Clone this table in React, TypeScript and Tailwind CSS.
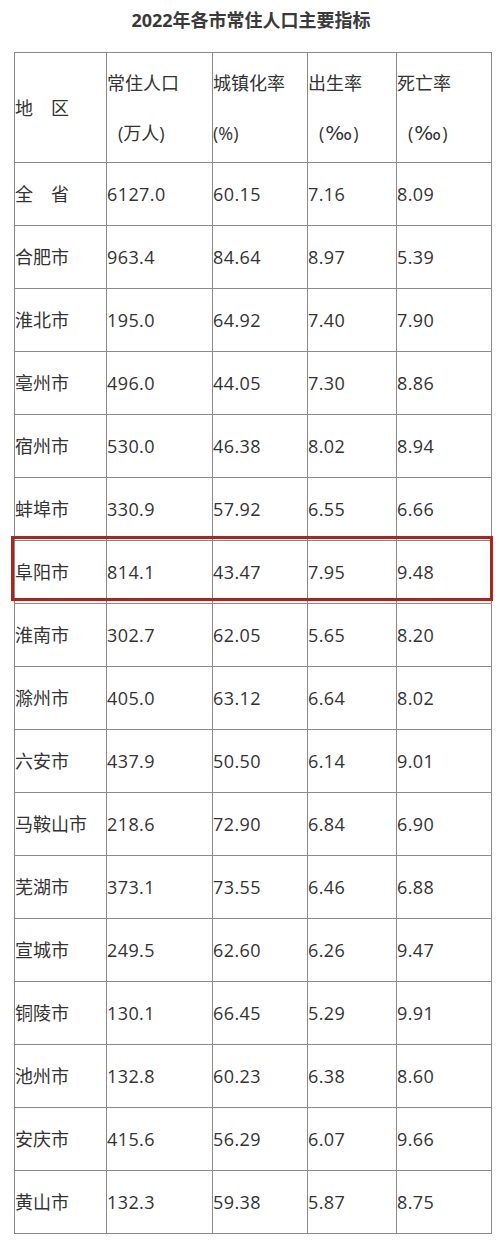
const rows: [string, string, string, string, string][] = [
  ["全\u3000省", "6127.0", "60.15", "7.16", "8.09"],
  ["合肥市", "963.4", "84.64", "8.97", "5.39"],
  ["淮北市", "195.0", "64.92", "7.40", "7.90"],
  ["亳州市", "496.0", "44.05", "7.30", "8.86"],
  ["宿州市", "530.0", "46.38", "8.02", "8.94"],
  ["蚌埠市", "330.9", "57.92", "6.55", "6.66"],
  ["阜阳市", "814.1", "43.47", "7.95", "9.48"],
  ["淮南市", "302.7", "62.05", "5.65", "8.20"],
  ["滁州市", "405.0", "63.12", "6.64", "8.02"],
  ["六安市", "437.9", "50.50", "6.14", "9.01"],
  ["马鞍山市", "218.6", "72.90", "6.84", "6.90"],
  ["芜湖市", "373.1", "73.55", "6.46", "6.88"],
  ["宣城市", "249.5", "62.60", "6.26", "9.47"],
  ["铜陵市", "130.1", "66.45", "5.29", "9.91"],
  ["池州市", "132.8", "60.23", "6.38", "8.60"],
  ["安庆市", "415.6", "56.29", "6.07", "9.66"],
  ["黄山市", "132.3", "59.38", "5.87", "8.75"],
];

const cell = "border border-[#8a8a8a] p-0 align-middle text-left whitespace-nowrap font-normal";

function Head({ top, unit, indent }: { top: string; unit: React.ReactNode; indent: boolean }) {
  return (
    <div className="flex flex-col gap-[26px]">
      <span>{top}</span>
      <span className={indent ? "pl-[11px]" : ""}>{unit}</span>
    </div>
  );
}

// Open Sans lacks a wide per-mille sign, so take DejaVu's
const permille = (
  <>
    (<span className="px-[1px] font-['DejaVu_Sans'] text-[20px] leading-[24px]">‰</span>)
  </>
);

export default function App() {
  return (
    <div
      className="w-[502px] h-[1242px] bg-white text-[#333] overflow-hidden"
      style={{ fontFamily: '"Open Sans", "Noto Sans CJK SC", sans-serif' }}
    >
      <h1 className="h-[44px] pt-[6px] text-center text-[18px] font-bold leading-[28px] text-[#3a3a3a]">
        2022年各市常住人口主要指标
      </h1>
      <div className="relative ml-[14px] mt-[8px] w-[478px]">
        <table className="w-[478px] table-fixed border-collapse text-[18px] leading-[24px]">
          <colgroup>
            <col className="w-[92px]" />
            <col className="w-[106px]" />
            <col className="w-[95px]" />
            <col className="w-[89px]" />
            <col className="w-[95px]" />
          </colgroup>
          <thead>
            <tr className="h-[110px]">
              <th className={cell}>地{"\u3000"}区</th>
              <th className={cell}>
                <Head top="常住人口" unit="(万人)" indent />
              </th>
              <th className={cell}>
                <Head top="城镇化率" unit="(%)" indent={false} />
              </th>
              <th className={cell}>
                <Head top="出生率" unit={permille} indent />
              </th>
              <th className={cell}>
                <Head top="死亡率" unit={permille} indent />
              </th>
            </tr>
          </thead>
          <tbody>
            {rows.map((r) => (
              <tr key={r[0]} className="h-[63px]">
                {r.map((v, i) => (
                  <td key={i} className={i === 0 ? cell : `${cell} tracking-[0.4px]`}>
                    {v}
                  </td>
                ))}
              </tr>
            ))}
          </tbody>
        </table>
        {/* highlight box round 阜阳市 */}
        <div className="pointer-events-none absolute left-[-3px] top-[484px] h-[65px] w-[482px] border-[3.5px] border-[#b3221b]" />
      </div>
    </div>
  );
}
